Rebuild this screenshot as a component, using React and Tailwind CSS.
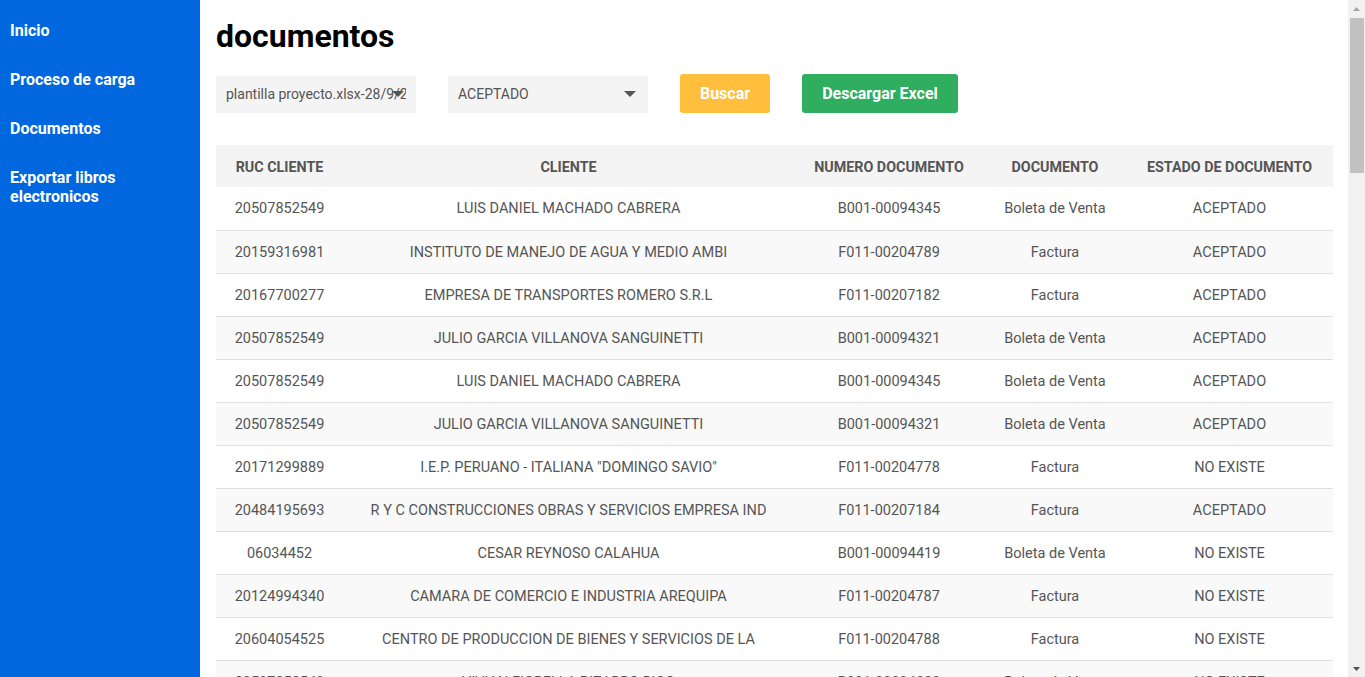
import React from "react";

const base = [
  ["20507852549", "LUIS DANIEL MACHADO CABRERA", "B001-00094345", "Boleta de Venta", "ACEPTADO"],
  ["20159316981", "INSTITUTO DE MANEJO DE AGUA Y MEDIO AMBI", "F011-00204789", "Factura", "ACEPTADO"],
  ["20167700277", "EMPRESA DE TRANSPORTES ROMERO S.R.L", "F011-00207182", "Factura", "ACEPTADO"],
  ["20507852549", "JULIO GARCIA VILLANOVA SANGUINETTI", "B001-00094321", "Boleta de Venta", "ACEPTADO"],
  ["20507852549", "LUIS DANIEL MACHADO CABRERA", "B001-00094345", "Boleta de Venta", "ACEPTADO"],
  ["20507852549", "JULIO GARCIA VILLANOVA SANGUINETTI", "B001-00094321", "Boleta de Venta", "ACEPTADO"],
  ["20171299889", "I.E.P. PERUANO - ITALIANA \"DOMINGO SAVIO\"", "F011-00204778", "Factura", "NO EXISTE"],
  ["20484195693", "R Y C CONSTRUCCIONES OBRAS Y SERVICIOS EMPRESA IND", "F011-00207184", "Factura", "ACEPTADO"],
  ["06034452", "CESAR REYNOSO CALAHUA", "B001-00094419", "Boleta de Venta", "NO EXISTE"],
  ["20124994340", "CAMARA DE COMERCIO E INDUSTRIA AREQUIPA", "F011-00204787", "Factura", "NO EXISTE"],
  ["20604054525", "CENTRO DE PRODUCCION DE BIENES Y SERVICIOS DE LA", "F011-00204788", "Factura", "NO EXISTE"],
  ["20507852549", "VIVIAN FIORELLA PIZARRO RICO", "B001-00094330", "Boleta de Venta", "NO EXISTE"],
];

const rows = [];
for (let i = 0; i < 60; i++) rows.push(base[i % base.length]);

function Arrow() {
  return (
    <svg width="12" height="7" viewBox="0 0 12 7">
      <path d="M0 0 L12 0 L6 6 Z" fill="#555" />
    </svg>
  );
}

function Select({ text }) {
  return (
    <div className="relative w-[200px] h-[37px] bg-[#f4f4f4] flex items-center px-[10px] text-[14px] text-[#555]">
      <span className="whitespace-nowrap overflow-hidden w-full">{text}</span>
      <span className="absolute right-[12px] top-[15px] flex"><Arrow /></span>
    </div>
  );
}

function Scrollbar() {
  return (
    <div className="w-[17px] shrink-0 h-full bg-[#f1f1f1] flex flex-col items-center">
      <div className="h-[17px] w-full flex items-center justify-center">
        <svg width="7" height="4" viewBox="0 0 7 4"><path d="M0 4 L7 4 L3.5 0 Z" fill="#a3a3a3" /></svg>
      </div>
      <div className="w-[14px] h-[155px] mt-px bg-[#c1c1c1]" />
      <div className="flex-1" />
      <div className="h-[17px] w-full flex items-center justify-center">
        <svg width="7" height="4" viewBox="0 0 7 4"><path d="M0 0 L7 0 L3.5 4 Z" fill="#505050" /></svg>
      </div>
    </div>
  );
}

export default function App() {
  return (
    <div className="h-screen flex" style={{ fontFamily: "Roboto, 'Noto Sans', sans-serif" }}>
      <div className="flex-1 min-w-0 h-full overflow-y-auto">
        <div className="flex min-h-full">
          <aside className="w-[200px] shrink-0 bg-[#0067de] text-white font-bold text-[16px] leading-[19px] px-[10px] pt-[21px]">
            <div className="mb-[30px]">Inicio</div>
            <div className="mb-[30px]">Proceso de carga</div>
            <div className="mb-[30px]">Documentos</div>
            <div>Exportar libros<br />electronicos</div>
          </aside>
          <main className="flex-1 min-w-0 pl-4 pr-[15px] pt-[17px]">
            <h1 className="text-[32px] leading-[38px] font-bold text-black">documentos</h1>
            <div className="flex items-end gap-8 mt-[19px]">
              <Select text="plantilla proyecto.xlsx-28/9/2" />
              <Select text="ACEPTADO" />
              <button className="w-[90px] h-[39px] rounded-[3px] bg-[#ffbe3b] text-white font-bold text-[16px]">Buscar</button>
              <button className="w-[156px] h-[39px] rounded-[3px] bg-[#2eae5e] text-white font-bold text-[16px]">Descargar Excel</button>
            </div>
            <table className="w-full mt-[32px] text-[14.5px] text-[#555] border-collapse table-fixed">
              <colgroup>
                <col className="w-[127px]" />
                <col className="w-[451px]" />
                <col className="w-[190px]" />
                <col className="w-[142px]" />
                <col />
              </colgroup>
              <thead>
                <tr className="bg-[#f4f4f4] h-[42px] text-[14.3px]">
                  <th className="font-bold text-center px-1 pt-[3px]">RUC CLIENTE</th>
                  <th className="font-bold text-center px-1 pt-[3px]">CLIENTE</th>
                  <th className="font-bold text-center px-1 pt-[3px]">NUMERO DOCUMENTO</th>
                  <th className="font-bold text-center px-1 pt-[3px]">DOCUMENTO</th>
                  <th className="font-bold text-center px-1 pt-[3px]">ESTADO DE DOCUMENTO</th>
                </tr>
              </thead>
              <tbody>
                {rows.map((r, i) => (
                  <tr key={i} className={`h-[43px] border-b border-[#e0e0e0] ${i % 2 === 1 ? "bg-[#f9f9f9]" : "bg-white"}`}>
                    {r.map((c, j) => (
                      <td key={j} className="text-center px-1 pt-[2px] whitespace-nowrap">{c}</td>
                    ))}
                  </tr>
                ))}
              </tbody>
            </table>
          </main>
        </div>
      </div>
      <Scrollbar />
    </div>
  );
}
